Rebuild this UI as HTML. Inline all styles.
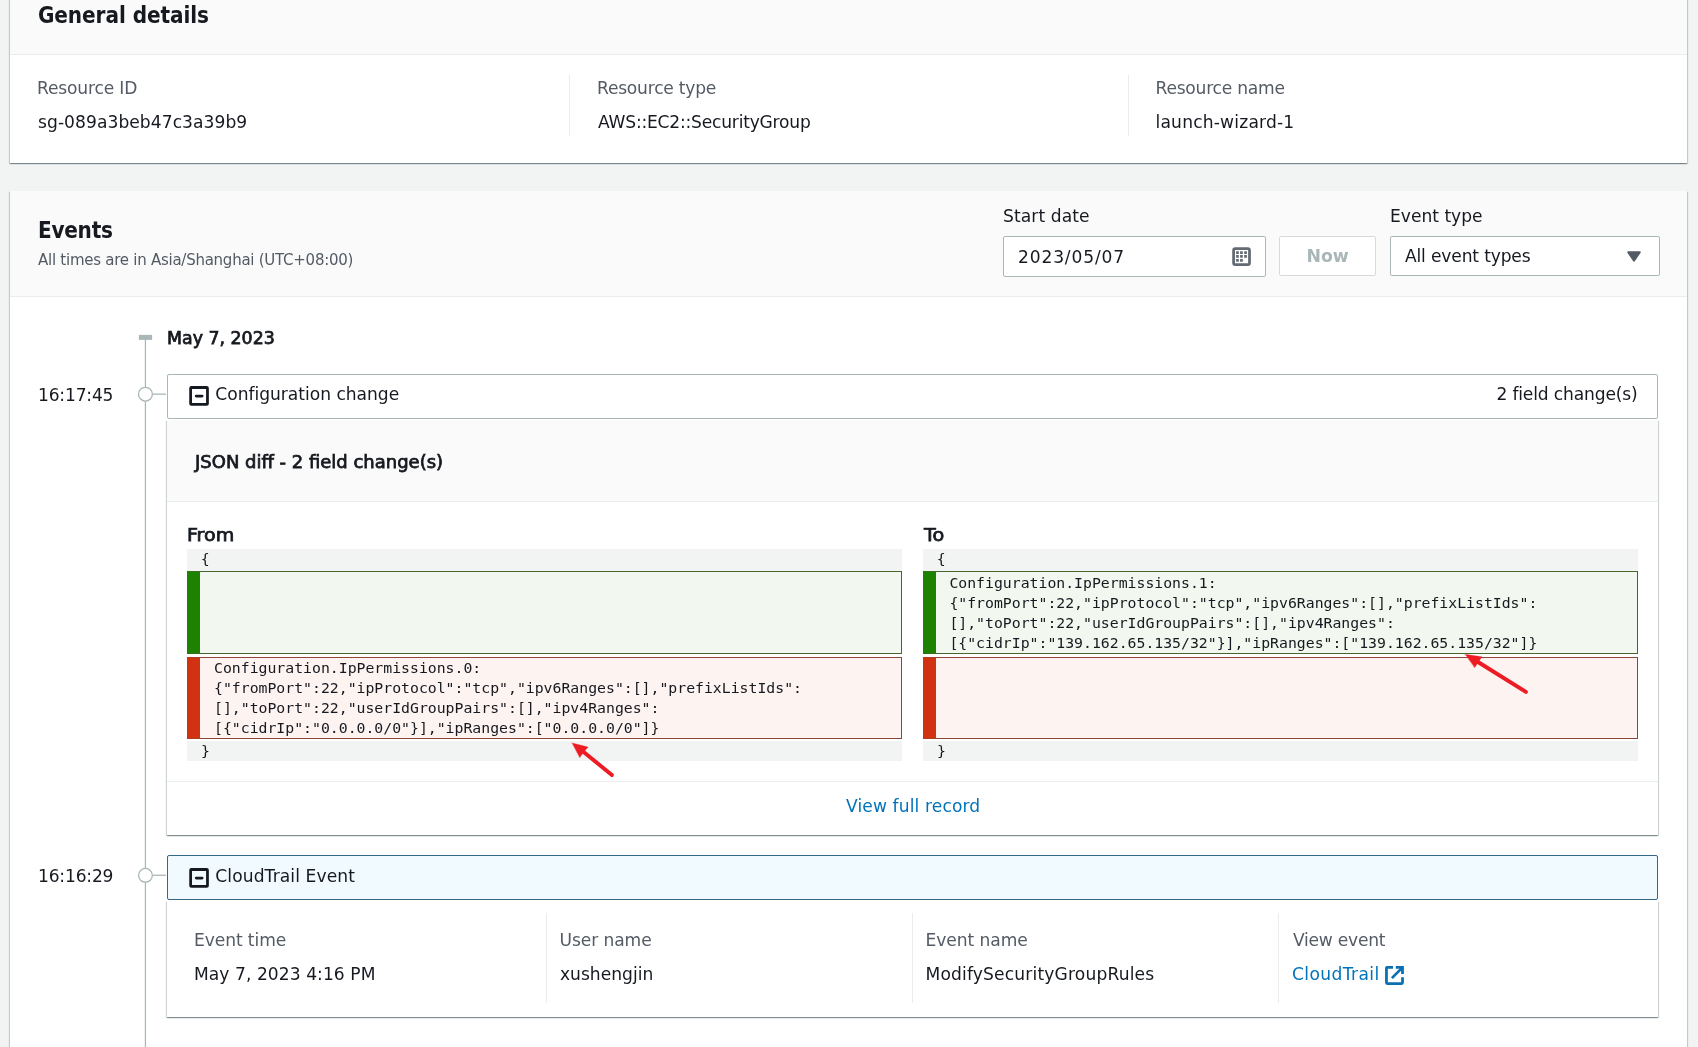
<!DOCTYPE html>
<html lang="en">
<head>
<meta charset="utf-8">
<title>AWS Config - Resource timeline</title>
<style>
html,body{margin:0;padding:0}
body{width:1698px;height:1047px;overflow:hidden;background:#f2f3f3;position:relative;
  font-family:"DejaVu Sans","Liberation Sans",sans-serif;font-size:17.1px;color:#16191f}
div,span,a{box-sizing:border-box}
.a{position:absolute}
.t{position:absolute;white-space:nowrap;line-height:20px;height:20px}
.b{font-family:"DejaVu Sans","Liberation Sans",sans-serif;font-weight:400;-webkit-text-stroke:0.75px #16191f;transform-origin:0 50%;transform:scaleX(1.07)}
.h{font-family:"DejaVu Sans Condensed","DejaVu Sans","Liberation Sans",sans-serif;font-weight:700}
.lbl{color:#545b64}
.link{color:#0073bb;text-decoration:none}
.card{position:absolute;left:10px;width:1677px;background:#fff;
  box-shadow:0 1px 1px 0 rgba(0,28,36,.3),1px 1px 1px 0 rgba(0,28,36,.15),-1px 1px 1px 0 rgba(0,28,36,.15)}
.hd{position:absolute;left:0;right:0;top:0;background:#fafafa;border-bottom:1px solid #eaeded}
.vdiv{position:absolute;width:1px;background:#eaeded}
.mono{font-family:"DejaVu Sans Mono","Liberation Mono",monospace;font-size:14.81px;line-height:20.15px;color:#16191f;white-space:pre}
.row{position:absolute;background:#f2f3f3}
.grn{position:absolute;border:1px solid #46672f;border-left:13px solid #1d8102;background:#f2f8f0}
.red{position:absolute;border:1px solid #8f4738;border-left:13px solid #d13212;background:#fdf3f1}
.code{position:absolute;left:14px;top:-0.4px}
.inp{position:absolute;background:#fff;border:1px solid #aab7b8;border-radius:2px}
.sh{box-shadow:0 1px 1px 0 rgba(0,28,36,.3),1px 1px 1px 0 rgba(0,28,36,.15),-1px 1px 1px 0 rgba(0,28,36,.15)}
</style>
</head>
<body>
<div id="root" style="position:absolute;left:0;top:0;width:1698px;height:1047px;will-change:transform">

<!-- General details card -->
<div class="card" style="top:-20px;height:183px">
  <div class="hd" style="height:75px"></div>
</div>
<span class="t h" style="left:37.9px;top:2px;font-size:22.3px;line-height:26px;height:26px;letter-spacing:-0.06px">General details</span>

<span class="t lbl" style="left:37px;top:78px;letter-spacing:-0.17px">Resource ID</span>
<span class="t" style="left:38px;top:112px;letter-spacing:0.06px">sg-089a3beb47c3a39b9</span>
<div class="vdiv" style="left:569px;top:75px;height:61px"></div>
<span class="t lbl" style="left:597px;top:78px;letter-spacing:-0.22px">Resource type</span>
<span class="t" style="left:598px;top:112px;letter-spacing:-0.21px">AWS::EC2::SecurityGroup</span>
<div class="vdiv" style="left:1128px;top:75px;height:61px"></div>
<span class="t lbl" style="left:1155.5px;top:78px;letter-spacing:-0.23px">Resource name</span>
<span class="t" style="left:1155.5px;top:112px;letter-spacing:0.19px">launch-wizard-1</span>

<!-- Events card -->
<div class="card" style="top:191px;height:900px">
  <div class="hd" style="height:106px"></div>
</div>
<span class="t h" style="left:38px;top:217px;font-size:22.3px;line-height:26px;height:26px;letter-spacing:-0.26px">Events</span>
<span class="t lbl" style="left:38px;top:250px;font-size:15px;letter-spacing:-0.256px">All times are in Asia/Shanghai (UTC+08:00)</span>

<span class="t" style="left:1003px;top:206px;letter-spacing:0.09px">Start date</span>
<div class="inp" style="left:1003px;top:236px;width:263px;height:41px"></div>
<span class="t" style="left:1018px;top:247px;letter-spacing:0.84px">2023/05/07</span>
<svg class="a" style="left:1232px;top:247px" width="19" height="19" viewBox="0 0 19 19">
  <rect x="1.6" y="1.6" width="15.9" height="15.9" rx="1.6" fill="#fff" stroke="#626a74" stroke-width="2.75"/>
  <path d="M4.1 4.2h2.7v2.7h-2.7zM8.1 4.2h2.7v2.7h-2.7zM12.2 4.2h2.7v2.7h-2.7zM4.1 8.1h2.7v2.7h-2.7zM8.1 8.1h2.7v2.7h-2.7zM12.2 8.1h2.7v2.7h-2.7zM4.1 12.1h2.7v2.7h-2.7zM8.1 12.1h2.7v2.7h-2.7z" fill="#626a74"/>
</svg>
<div class="inp" style="left:1279px;top:236px;width:97px;height:40px;border-color:#d5dbdb"></div>
<span class="t" style="left:1306.5px;top:246px;color:#aab7b8;font-size:17.3px;font-weight:700;font-family:'DejaVu Sans','Liberation Sans',sans-serif">Now</span>
<span class="t" style="left:1390px;top:206px">Event type</span>
<div class="inp" style="left:1390px;top:236px;width:270px;height:40px"></div>
<span class="t" style="left:1405px;top:246px;letter-spacing:-0.16px">All event types</span>
<svg class="a" style="left:1626px;top:250px" width="16" height="13" viewBox="0 0 16 13">
  <path d="M2.2 2.2h11.6L8 10.6z" fill="#545b64" stroke="#545b64" stroke-width="2" stroke-linejoin="round"/>
</svg>

<!-- timeline -->
<svg class="a" style="left:0;top:0" width="1698" height="1047" viewBox="0 0 1698 1047">
  <rect x="138.9" y="334.9" width="13.2" height="5" fill="#aab7b8"/>
  <rect x="144.8" y="337" width="1.25" height="720" fill="#aab7b8"/>
  <rect x="152.5" y="393.5" width="13.5" height="1.3" fill="#aab7b8"/>
  <circle cx="145.45" cy="394.2" r="6.9" fill="#fff" stroke="#aab7b8" stroke-width="1.3"/>
  <rect x="152.5" y="874.6" width="13.5" height="1.3" fill="#aab7b8"/>
  <circle cx="145.45" cy="875.3" r="6.9" fill="#fff" stroke="#aab7b8" stroke-width="1.3"/>
</svg>
<span class="t b" style="left:166.7px;top:328px;font-size:17px;transform:scaleX(1.022)">May 7, 2023</span>

<!-- event 1 -->
<span class="t" style="left:38px;top:385px;letter-spacing:-0.19px">16:17:45</span>
<div class="inp" style="left:167px;top:374px;width:1491px;height:45px"></div>
<svg class="a" style="left:189px;top:386px" width="20" height="20" viewBox="0 0 20 20">
  <rect x="1.63" y="1.5" width="16.84" height="16.84" rx="0.7" fill="none" stroke="#16191f" stroke-width="2.76"/>
  <path d="M7.2 10.1h5.9" stroke="#16191f" stroke-width="2.76" stroke-linecap="round"/>
</svg>
<span class="t" style="left:215.3px;top:384px;letter-spacing:-0.02px">Configuration change</span>
<span class="t" style="right:60.5px;top:384px;letter-spacing:-0.16px">2 field change(s)</span>

<!-- expanded container -->
<div class="a sh" style="left:167px;top:420px;width:1491px;height:415px;background:#fff">
  <div class="hd" style="height:82px"></div>
  <div class="a" style="left:0;right:0;top:361px;height:1px;background:#eaeded"></div>
</div>
<span class="t b" style="left:194.6px;top:452px;font-size:17px;transform:scaleX(1.058)">JSON diff - 2 field change(s)</span>

<span class="t b" style="left:187px;top:525px;font-size:17px;transform:scaleX(1.12)">From</span>
<div class="row mono" style="left:187px;top:549px;width:715px;height:22px"><span class="code" style="left:4.8px;top:0">&nbsp;{</span></div>
<div class="grn" style="left:187px;top:571px;width:715px;height:83px"></div>
<div class="red mono" style="left:187px;top:657px;width:715px;height:82px"><span class="code">Configuration.IpPermissions.0:
{"fromPort":22,"ipProtocol":"tcp","ipv6Ranges":[],"prefixListIds":
[],"toPort":22,"userIdGroupPairs":[],"ipv4Ranges":
[{"cidrIp":"0.0.0.0/0"}],"ipRanges":["0.0.0.0/0"]}</span></div>
<div class="row mono" style="left:187px;top:741px;width:715px;height:20px"><span class="code" style="left:5.2px;top:0.3px">&nbsp;}</span></div>

<span class="t b" style="left:924px;top:525px;font-size:17px;transform:scaleX(1.13)">To</span>
<div class="row mono" style="left:923px;top:549px;width:715px;height:22px"><span class="code" style="left:4.8px;top:0">&nbsp;{</span></div>
<div class="grn mono" style="left:923px;top:571px;width:715px;height:83px"><span class="code" style="left:13.4px;top:0.6px">Configuration.IpPermissions.1:
{"fromPort":22,"ipProtocol":"tcp","ipv6Ranges":[],"prefixListIds":
[],"toPort":22,"userIdGroupPairs":[],"ipv4Ranges":
[{"cidrIp":"139.162.65.135/32"}],"ipRanges":["139.162.65.135/32"]}</span></div>
<div class="red" style="left:923px;top:657px;width:715px;height:82px"></div>
<div class="row mono" style="left:923px;top:741px;width:715px;height:20px"><span class="code" style="left:5.2px;top:0.3px">&nbsp;}</span></div>

<a class="t link" style="left:846px;top:796px;letter-spacing:0.12px">View full record</a>

<!-- red annotation arrows -->
<svg class="a" style="left:0;top:0;pointer-events:none" width="1698" height="1047" viewBox="0 0 1698 1047">
  <g fill="#ed1c24" stroke="#ed1c24" stroke-linecap="round">
    <path d="M611.9 775L583 751.5" stroke-width="4" fill="none"/>
    <path d="M572.1 742.9L588.2 747.1L583.8 751.9L579.8 757.5Z" stroke-width="0.3" stroke-linejoin="round"/>
    <path d="M1525.9 691.9L1478 662" stroke-width="4" fill="none"/>
    <path d="M1465.3 654.3L1482 656.8L1478.3 662.2L1474.7 667.6Z" stroke-width="0.3" stroke-linejoin="round"/>
  </g>
</svg>

<!-- event 2 -->
<span class="t" style="left:38px;top:866px;letter-spacing:-0.19px">16:16:29</span>
<div class="inp" style="left:167px;top:855px;width:1491px;height:45px;border-color:#356888;background:#f1faff"></div>
<svg class="a" style="left:189px;top:868.3px" width="20" height="20" viewBox="0 0 20 20">
  <rect x="1.63" y="1.5" width="16.84" height="16.84" rx="0.7" fill="none" stroke="#16191f" stroke-width="2.76"/>
  <path d="M7.2 10.1h5.9" stroke="#16191f" stroke-width="2.76" stroke-linecap="round"/>
</svg>
<span class="t" style="left:215.3px;top:866px;letter-spacing:0.1px">CloudTrail Event</span>

<div class="a sh" style="left:167px;top:901px;width:1491px;height:116px;background:#fff"></div>
<span class="t lbl" style="left:194px;top:930px;letter-spacing:-0.09px">Event time</span>
<span class="t" style="left:194px;top:964px;letter-spacing:0.06px">May 7, 2023 4:16 PM</span>
<div class="vdiv" style="left:546px;top:913px;height:90px"></div>
<span class="t lbl" style="left:559.5px;top:930px;letter-spacing:-0.09px">User name</span>
<span class="t" style="left:560px;top:964px">xushengjin</span>
<div class="vdiv" style="left:912px;top:913px;height:90px"></div>
<span class="t lbl" style="left:925.5px;top:930px;letter-spacing:-0.06px">Event name</span>
<span class="t" style="left:925.5px;top:964px;letter-spacing:0.16px">ModifySecurityGroupRules</span>
<div class="vdiv" style="left:1278px;top:913px;height:90px"></div>
<span class="t lbl" style="left:1293px;top:930px;letter-spacing:-0.24px">View event</span>
<a class="t link" style="left:1292px;top:964px;letter-spacing:0.38px">CloudTrail</a>
<svg class="a" style="left:1385px;top:966px" width="20" height="20" viewBox="0 0 20 20">
  <path d="M8 1.35H2.2Q1.45 1.35 1.45 2.1V16.8Q1.45 17.55 2.2 17.55H16.75Q17.5 17.55 17.5 16.8V11.2" fill="none" stroke="#0a6fb3" stroke-width="2.76"/>
  <path d="M10.8 1.35H17.5V7.9" fill="none" stroke="#0a6fb3" stroke-width="2.76"/>
  <path d="M16.8 2.1L6.9 12.1" fill="none" stroke="#0a6fb3" stroke-width="2.76"/>
</svg>

</div>
</body>
</html>
